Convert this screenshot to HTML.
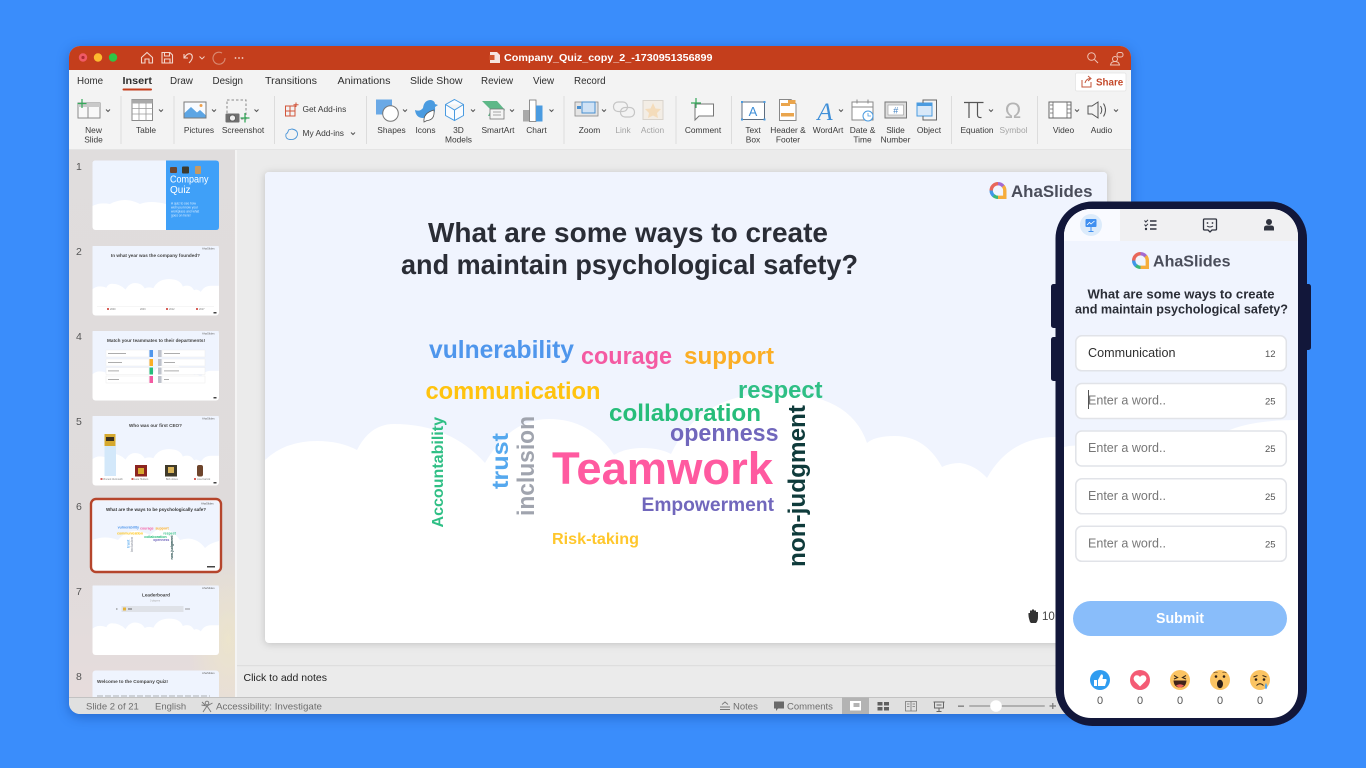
<!DOCTYPE html>
<html lang="en"><head><meta charset="utf-8"><title>AhaSlides PowerPoint</title>
<style>
html,body{margin:0;padding:0;width:1366px;height:768px;overflow:hidden;background:#3a8dfb}
svg{display:block;font-family:"Liberation Sans",Arial,sans-serif}
.l{font-size:8.4px;fill:#3a3a3a;text-anchor:middle}
.g{font-size:8.4px;fill:#a5a5a5;text-anchor:middle}
.t{font-size:9.8px;fill:#2e2e2e}
.c{fill:none;stroke:#555;stroke-width:1}
.n{font-size:10.5px;fill:#555}
.s{font-size:9.5px;fill:#6e6e6e}
.w{font-weight:700}
.ph{font-size:13px;fill:#777}
.ct{font-size:9.5px;fill:#555}
.z{font-size:11px;fill:#555;text-anchor:middle}
</style></head><body>
<svg width="1366" height="768" viewBox="0 0 1366 768" xmlns="http://www.w3.org/2000/svg">
<defs>
<linearGradient id="pane" x1="0" y1="0" x2="0" y2="1"><stop offset="0" stop-color="#e0dddd"/><stop offset=".7" stop-color="#dfdbdb"/><stop offset="1" stop-color="#e6dcdc"/></linearGradient>
<radialGradient id="yel" cx=".5" cy=".5" r=".5"><stop offset="0" stop-color="#f0e8c4" stop-opacity=".65"/><stop offset="1" stop-color="#f0e8c4" stop-opacity="0"/></radialGradient>
<clipPath id="win"><rect x="69" y="46" width="1062" height="668" rx="11"/></clipPath>
<clipPath id="scr"><rect x="1064" y="209" width="234" height="509" rx="27"/></clipPath>
<clipPath id="pn"><rect x="69" y="150" width="166" height="547"/></clipPath>
<path id="sky" d="M265 460Q285 441 317 441Q340 441 357 450Q370 424 394 424Q450 424 485 463Q510 419 549 419Q590 419 614 455Q625 448 642 448Q660 448 671 454Q700 393 775 393Q850 393 867 443Q875 436 895 436Q925 436 942 467Q950 463 960 463Q975 465 987 478Q1010 437 1056 437H1107V176Q1107 172 1103 172H269Q265 172 265 176Z"/>
<g id="wc1" font-weight="700">
<text x="429" y="358" font-size="25" fill="#4f96ec" textLength="145" lengthAdjust="spacingAndGlyphs">vulnerability</text>
<text x="581" y="364" font-size="24" fill="#f45aa2" textLength="91" lengthAdjust="spacingAndGlyphs">courage</text>
<text x="684" y="364" font-size="24" fill="#fbae25" textLength="90" lengthAdjust="spacingAndGlyphs">support</text>
<text x="425.5" y="399" font-size="24" fill="#ffc30f" textLength="175" lengthAdjust="spacingAndGlyphs">communication</text>
<text x="738" y="398" font-size="24" fill="#2fbf85" textLength="84.5" lengthAdjust="spacingAndGlyphs">respect</text>
<text x="609" y="421" font-size="24" fill="#27bd7a" textLength="152" lengthAdjust="spacingAndGlyphs">collaboration</text>
<text x="670" y="441" font-size="24" fill="#7167bc" textLength="108.5" lengthAdjust="spacingAndGlyphs">openness</text>
<text transform="translate(508 489) rotate(-90)" font-size="23" fill="#55a8ee" textLength="56" lengthAdjust="spacingAndGlyphs">trust</text>
<text transform="translate(534 516) rotate(-90)" font-size="24" fill="#a0a4ae" textLength="100" lengthAdjust="spacingAndGlyphs">inclusion</text>
<text transform="translate(805 567) rotate(-90)" font-size="24" fill="#0f3b3b" textLength="162" lengthAdjust="spacingAndGlyphs">non-judgment</text>
</g>
<g id="logo">
<path d="M9 2.2A6.8 6.8 0 0 1 14.4 5" fill="none" stroke="#a46ad0" stroke-width="3.4"/>
<path d="M2.2 9A6.8 6.8 0 0 1 9 2.2" fill="none" stroke="#e8665a" stroke-width="3.4"/>
<path d="M14.2 4.6A6.8 6.8 0 0 1 15.8 9V15.8H9" fill="none" stroke="#f6ad3c" stroke-width="3.4"/>
<path d="M9 15.8A6.8 6.8 0 0 1 4.4 14" fill="none" stroke="#3cb878" stroke-width="3.4"/>
<path d="M4.6 14.2A6.8 6.8 0 0 1 2.2 9" fill="none" stroke="#3f97e8" stroke-width="3.4"/>
</g>
</defs>

<!-- window -->
<rect x="69" y="46" width="1062" height="668" rx="11" fill="#ececec" style="filter:drop-shadow(0 3px 6px rgba(10,60,150,.45))"/>
<g clip-path="url(#win)">
<rect x="69" y="46" width="1062" height="24" fill="#c43e1c"/>
<rect x="69" y="70" width="1062" height="80" fill="#f3f3f3"/>
<rect x="69" y="149.5" width="1062" height="1" fill="#d4d4d4"/>
<rect x="69" y="150" width="166" height="547" fill="url(#pane)"/>
<ellipse cx="228" cy="640" rx="40" ry="90" fill="url(#yel)"/>
<rect x="235" y="150" width="2" height="547" fill="#f4f4f4"/>
<rect x="237" y="150" width="894" height="547" fill="#ebebeb"/>
<rect x="237" y="665" width="894" height="1.2" fill="#dedede"/>
<rect x="69" y="697" width="1062" height="17" fill="#e0e0e0"/>
<rect x="69" y="697" width="1062" height="1" fill="#c2c2c2"/>
</g>

<!-- title bar -->
<circle cx="83" cy="57.5" r="4.2" fill="#f05a66"/><circle cx="83" cy="57.5" r="1.6" fill="#b02a34"/>
<circle cx="98" cy="57.5" r="4.2" fill="#fdbb2e"/><circle cx="113" cy="57.5" r="4.2" fill="#2fc545"/>
<g fill="none" stroke="#f3d6cc" stroke-width="1.1">
<path d="M141.5 57.5L147 52.5L152.5 57.5V63H149V59H145V63H141.5Z"/>
<path d="M162 52.5H170L172.5 55V63H162ZM164.5 52.5V56H169.5V52.5M164.5 63V59H170V63"/>
<path d="M184 54V58H188M184.5 57.5Q188 52 191.5 54.5Q194 58 189 63"/>
<path d="M199.5 56.5L202 59L204.5 56.5" stroke-width=".9"/>
<path d="M222 53A6 6 0 1 0 225 58" stroke="#d98a72"/>
</g>
<g fill="#f3d6cc"><circle cx="235.5" cy="58" r=".9"/><circle cx="239" cy="58" r=".9"/><circle cx="242.5" cy="58" r=".9"/></g>
<path d="M490 52H497L500 55V63H490Z" fill="#f6e5df"/><rect x="489.5" y="55" width="5" height="5" fill="#d2572f"/>
<text x="504" y="61" font-size="9.8" font-weight="700" fill="#fff" textLength="208.5" lengthAdjust="spacingAndGlyphs">Company_Quiz_copy_2_-1730951356899</text>
<g fill="none" stroke="#eec4b6" stroke-width="1"><circle cx="1091.5" cy="56.5" r="3.8"/><path d="M1094.5 59.5L1098 63"/>
<circle cx="1115" cy="59" r="2.5"/><path d="M1110.5 65Q1111 61.5 1115 61.5Q1119 61.5 1119.5 65Z"/><rect x="1117" y="52.5" width="6" height="4.5" rx="2"/></g>

<!-- tabs -->
<text class="t" x="77" y="84">Home</text>
<text class="t w" x="122.5" y="84" textLength="29.5" lengthAdjust="spacingAndGlyphs">Insert</text>
<rect x="122.5" y="88.5" width="29.5" height="2" rx="1" fill="#c43e1c"/>
<text class="t" x="170" y="84">Draw</text>
<text class="t" x="212.5" y="84">Design</text>
<text class="t" x="265" y="84" textLength="52" lengthAdjust="spacingAndGlyphs">Transitions</text>
<text class="t" x="337.5" y="84" textLength="53" lengthAdjust="spacingAndGlyphs">Animations</text>
<text class="t" x="410" y="84" textLength="52.5" lengthAdjust="spacingAndGlyphs">Slide Show</text>
<text class="t" x="481" y="84">Review</text>
<text class="t" x="533" y="84">View</text>
<text class="t" x="574" y="84">Record</text>
<rect x="1075.5" y="73" width="50.5" height="18" rx="1.5" fill="#fff" stroke="#e4e4e4" stroke-width=".8"/>
<path d="M1082 80V87H1091V82M1085 83Q1086 79 1090 78.5M1088 76L1091 78.5L1088 81" fill="none" stroke="#c4553a" stroke-width="1"/>
<text x="1096" y="85.5" font-size="9.8" font-weight="700" fill="#c4492a">Share</text>

<!-- ribbon separators -->
<g fill="#dcdcdc"><rect x="120.5" y="96" width="1" height="48"/><rect x="173.5" y="96" width="1" height="48"/><rect x="274" y="96" width="1" height="48"/><rect x="366" y="96" width="1" height="48"/><rect x="563.5" y="96" width="1" height="48"/><rect x="675.5" y="96" width="1" height="48"/><rect x="731" y="96" width="1" height="48"/><rect x="951" y="96" width="1" height="48"/><rect x="1037" y="96" width="1" height="48"/></g>

<!-- ribbon labels -->
<text class="l" x="93.5" y="133">New</text><text class="l" x="93.5" y="142.5">Slide</text>
<text class="l" x="146" y="133">Table</text>
<text class="l" x="199" y="133">Pictures</text>
<text class="l" x="243" y="133">Screenshot</text>
<text x="302.5" y="112" font-size="8.4" fill="#3a3a3a">Get Add-ins</text>
<text x="302.5" y="136" font-size="8.4" fill="#3a3a3a">My Add-ins</text>
<text class="l" x="391.5" y="133">Shapes</text><text class="l" x="425.5" y="133">Icons</text>
<text class="l" x="458.5" y="133">3D</text><text class="l" x="458.5" y="142.5">Models</text>
<text class="l" x="498" y="133">SmartArt</text><text class="l" x="536.5" y="133">Chart</text>
<text class="l" x="589.5" y="133">Zoom</text><text class="g" x="623" y="133">Link</text><text class="g" x="652.5" y="133">Action</text>
<text class="l" x="703" y="133">Comment</text>
<text class="l" x="753" y="133">Text</text><text class="l" x="753" y="142.5">Box</text>
<text class="l" x="788" y="133">Header &amp;</text><text class="l" x="788" y="142.5">Footer</text>
<text class="l" x="828" y="133">WordArt</text>
<text class="l" x="862.5" y="133">Date &amp;</text><text class="l" x="862.5" y="142.5">Time</text>
<text class="l" x="895.5" y="133">Slide</text><text class="l" x="895.5" y="142.5">Number</text>
<text class="l" x="929" y="133">Object</text>
<text class="l" x="977" y="133">Equation</text><text class="g" x="1013.5" y="133">Symbol</text>
<text class="l" x="1063.5" y="133">Video</text><text class="l" x="1101.5" y="133">Audio</text>

<!-- chevrons -->
<g class="c"><path d="M106 109.5l2 2 2-2M159 109.5l2 2 2-2M212 109.5l2 2 2-2M254.5 109.5l2 2 2-2M351 132.5l2 2 2-2M403 109.5l2 2 2-2M471 109.5l2 2 2-2M510 109.5l2 2 2-2M549.5 109.5l2 2 2-2M602 109.5l2 2 2-2M839 109.5l2 2 2-2M989 109.5l2 2 2-2M1075 109.5l2 2 2-2M1114 109.5l2 2 2-2"/></g>

<!-- ribbon icons -->
<rect x="78" y="103" width="22" height="15" fill="#f8f8f8" stroke="#8a8a8a"/><rect x="78" y="103" width="22" height="4" fill="#c9c9c9"/><path d="M88 107V118" stroke="#8a8a8a"/>
<path d="M82 99V108M77.5 103.5H86.5" stroke="#35a85a" stroke-width="1.2"/>
<rect x="132" y="99.5" width="20.5" height="21" fill="#fff" stroke="#8a8a8a"/><rect x="132" y="99.5" width="20.5" height="4" fill="#a9a9a9"/>
<path d="M139 103V120.5M146 103V120.5M132 108.5H152.5M132 114H152.5" stroke="#9a9a9a" stroke-width=".8"/>
<rect x="184" y="102" width="22" height="16" fill="#f8fbff" stroke="#7a7a7a"/>
<path d="M184.5 117.5V113L191 107L197 112.5L200 110L205.5 115V117.5Z" fill="#5ca5e4"/><circle cx="201" cy="105.5" r="1.5" fill="#f0a04a"/>
<rect x="227" y="100" width="19" height="19" fill="none" stroke="#8a8a8a" stroke-dasharray="2.5 2"/>
<rect x="225.5" y="113.5" width="14" height="9" rx="1" fill="#6f6f6f"/><circle cx="232.5" cy="118" r="3" fill="#eee" stroke="#555" stroke-width=".7"/>
<path d="M245 113V122.5M240.5 118H249.5" stroke="#35a85a" stroke-width="1.3"/>
<path d="M285.5 106H295V116H285.5ZM290 106V116M285.5 111H295M296 102.5V107M293.5 104.7H298.5" fill="none" stroke="#d2553a" stroke-width="1"/>
<path d="M292 129Q298 130 297.5 135Q296 140 290 139.5Q285 139 286 134Q288 133 288.5 130Z" fill="none" stroke="#4d97d8" stroke-width=".9"/>
<rect x="376" y="99.5" width="16" height="15" fill="#6aa9e6"/><circle cx="390.5" cy="113.5" r="7.8" fill="#fff" stroke="#777"/>
<path d="M415 110Q420 112 423 108Q424 100 431 100Q435 101 435 104L438 105L435 107Q436 116 428 118H423Q416 118 415 110Z" fill="#4a9be0"/>
<path d="M424 122Q423 113 434 110Q435 120 427 120.5Z" fill="#fff" stroke="#555" stroke-width=".8"/>
<path d="M454.5 99.5L463.5 104.5V115.5L454.5 120.5L445.5 115.5V104.5ZM445.5 104.5L454.5 110L463.5 104.5M454.5 110V120.5" fill="#fafcff" stroke="#4a9be0" stroke-width="1"/>
<path d="M482 101H497L505 110L497 116H488L491 110Z" fill="#5eb888"/><rect x="490" y="109" width="14" height="10" fill="#f4f4f4" stroke="#777" stroke-width=".8"/><path d="M493 112H501M493 115H501" stroke="#888" stroke-width=".8"/>
<rect x="523" y="110" width="6.5" height="11.5" fill="#a9a9a9"/><rect x="529.5" y="100" width="6.5" height="21.5" fill="#fff" stroke="#777" stroke-width=".8"/><rect x="536" y="105.5" width="6.5" height="16" fill="#4a9be0"/>
<rect x="575" y="102" width="23" height="14" fill="#e4e4e4" stroke="#888" stroke-width=".8"/><rect x="582" y="102" width="13" height="11" fill="#cfe2f5" stroke="#4a90d0"/><rect x="577" y="106" width="4" height="3" fill="#4a90d0"/>
<g fill="none" stroke="#c5c5c5" stroke-width="1.2"><rect x="613.5" y="102" width="14" height="9.5" rx="4.5"/><rect x="620.5" y="107.5" width="14" height="9.5" rx="4.5"/></g>
<rect x="643" y="100.5" width="20" height="19" fill="#f3ede5" stroke="#d8d3cc"/><path d="M653 103L655.5 108.5L661 109L657 113L658 118L653 115.5L648 118L649 113L645 109L650.5 108.5Z" fill="#f4dcbb"/>
<path d="M695 104H713.5V116H699L695 120V116H695Z" fill="#fff" stroke="#777"/><path d="M696 98V108M691 103H701" stroke="#35a85a" stroke-width="1.2"/>
<rect x="742" y="102" width="22.5" height="17.5" fill="#fff" stroke="#5d6d80"/><g fill="#4a9be0"><rect x="741" y="101" width="2" height="2"/><rect x="763.5" y="101" width="2" height="2"/><rect x="741" y="118.5" width="2" height="2"/><rect x="763.5" y="118.5" width="2" height="2"/></g>
<text x="753" y="116" font-size="13" fill="#3f8fd8" text-anchor="middle">A</text>
<path d="M779.5 99.5H791L796 104V120.5H779.5Z" fill="#fff" stroke="#888"/><rect x="781" y="103" width="9" height="3" fill="#eaa54d"/><rect x="781" y="113" width="13" height="3.5" fill="#eaa54d"/><rect x="788" y="100" width="7.5" height="4" fill="#eaa54d"/>
<text x="825" y="120" font-size="25" font-style="italic" fill="#3f8fd8" text-anchor="middle" font-family="Liberation Serif">A</text>
<rect x="852" y="102" width="21" height="18" fill="#fff" stroke="#8a8a8a"/><path d="M852 107H873M857 99.5V103.5M868 99.5V103.5" stroke="#8a8a8a"/><circle cx="868" cy="116" r="5" fill="#fff" stroke="#4a9be0"/><path d="M868 113V116H871" fill="none" stroke="#4a9be0" stroke-width=".8"/>
<rect x="885" y="102" width="21.5" height="16" fill="#dedede" stroke="#777"/><rect x="888" y="105" width="15.5" height="10" fill="#fff" stroke="#9a9a9a" stroke-width=".6"/><text x="895.8" y="113.5" font-size="9" fill="#3f7fc0" text-anchor="middle">#</text>
<rect x="917" y="103" width="15" height="13" fill="#d8e8f8" stroke="#4a9be0"/><rect x="917" y="103" width="15" height="3" fill="#4a9be0"/><path d="M923 103V100H936.5V120H923V116" fill="none" stroke="#666"/>
<path d="M964 102.5H983.5M969 102.5V118M977.5 102.5V115Q977.5 118 981.5 117.5" fill="none" stroke="#555" stroke-width="1.2"/>
<text x="1013" y="118" font-size="22" fill="#b4b4b4" text-anchor="middle" font-family="Liberation Sans">Ω</text>
<rect x="1049" y="102" width="22" height="16" fill="#fff" stroke="#666"/><path d="M1053 102V118M1067 102V118" stroke="#666" stroke-width=".8"/><path d="M1050 105H1053M1050 109H1053M1050 113H1053M1067 105H1071M1067 109H1071M1067 113H1071" stroke="#666" stroke-width=".8"/>
<path d="M1088 106H1092L1098 102V118L1092 114H1088ZM1100.5 106Q1103 110 1100.5 114M1103.5 103.5Q1107.5 110 1103.5 116.5" fill="none" stroke="#555"/>

<!-- thumbnails -->
<g clip-path="url(#pn)">
<text class="n" x="76" y="170">1</text><text class="n" x="76" y="255">2</text><text class="n" x="76" y="340">4</text><text class="n" x="76" y="425">5</text><text class="n" x="76" y="510">6</text><text class="n" x="76" y="595">7</text><text class="n" x="76" y="680">8</text>

<!-- 1 -->
<rect x="92.5" y="160.5" width="126.5" height="69.5" rx="3" fill="#fff"/>
<path d="M92.5 163.5Q92.5 160.5 95.5 160.5H166V204Q150 200 140 204Q125 196 110 204Q100 202 92.5 206Z" fill="#eff4fe"/>
<path d="M166 160.5H216Q219 160.5 219 163.5V227Q219 230 216 230H166Z" fill="#3fa0f8"/>
<rect x="170" y="167" width="7" height="6" rx="1" fill="#6d4630"/><rect x="182" y="166.5" width="7" height="7" rx="1" fill="#3d3a2c"/><rect x="195" y="166" width="6" height="8" rx="1" fill="#c69a64"/>
<text x="170" y="182.5" font-size="10" fill="#fff" textLength="38.5" lengthAdjust="spacingAndGlyphs">Company</text><text x="170" y="193" font-size="10" fill="#fff">Quiz</text>
<g font-size="3.2" fill="#d6ebff"><text x="171" y="204.5">A quiz to see how</text><text x="171" y="208.5">well you know your</text><text x="171" y="212.5">workplace and what</text><text x="171" y="216.5">goes on here!</text></g>

<!-- 2 -->
<rect x="92.5" y="246" width="126.5" height="69.5" rx="3" fill="#fff"/>
<use href="#sky" fill="#eff4fe" transform="translate(92.5 246) scale(.15) translate(-265 -172)"/>
<text x="111" y="257" font-size="4.3" font-weight="700" fill="#444" textLength="89" lengthAdjust="spacingAndGlyphs">In what year was the company founded?</text>
<g fill="#d8605a"><rect x="107" y="308" width="2" height="2"/><rect x="166" y="308" width="2" height="2"/><rect x="196" y="308" width="2" height="2"/></g>
<path d="M97 306.5H214" stroke="#eee" stroke-width=".5"/>
<g font-size="2.5" fill="#777"><text x="110" y="310">2000</text><text x="140" y="310">2003</text><text x="169" y="310">2012</text><text x="199" y="310">2017</text></g>
<rect x="213.5" y="312" width="3" height="1.5" fill="#444"/>
<text x="202" y="249.5" font-size="2.8" fill="#666">AhaSlides</text>

<!-- 4 -->
<rect x="92.5" y="331" width="126.5" height="69.5" rx="3" fill="#fff"/>
<use href="#sky" fill="#eff4fe" transform="translate(92.5 331) scale(.15) translate(-265 -172)"/>
<text x="107" y="342" font-size="4.3" font-weight="700" fill="#444" textLength="98" lengthAdjust="spacingAndGlyphs">Match your teammates to their departments!</text>
<g fill="#fff" stroke="#e8e8e8" stroke-width=".4"><rect x="106" y="350" width="43" height="7"/><rect x="106" y="359" width="43" height="7"/><rect x="106" y="367.5" width="43" height="7"/><rect x="106" y="376" width="43" height="7"/><rect x="162" y="350" width="43" height="7"/><rect x="162" y="359" width="43" height="7"/><rect x="162" y="367.5" width="43" height="7"/><rect x="162" y="376" width="43" height="7"/></g>
<rect x="149.5" y="350" width="3.5" height="7" fill="#4f96ec"/><rect x="149.5" y="359" width="3.5" height="7" fill="#fbae25"/><rect x="149.5" y="367.5" width="3.5" height="7" fill="#27bd7a"/><rect x="149.5" y="376" width="3.5" height="7" fill="#f45aa2"/>
<g fill="#bfc3cc"><rect x="158" y="350" width="3.5" height="7"/><rect x="158" y="359" width="3.5" height="7"/><rect x="158" y="367.5" width="3.5" height="7"/><rect x="158" y="376" width="3.5" height="7"/></g>
<g fill="#999"><rect x="108" y="353" width="18" height=".8"/><rect x="108" y="362" width="14" height=".8"/><rect x="108" y="370.5" width="11" height=".8"/><rect x="108" y="379" width="11" height=".8"/><rect x="164" y="353" width="16" height=".8"/><rect x="164" y="362" width="11" height=".8"/><rect x="164" y="370.5" width="15" height=".8"/><rect x="164" y="379" width="5" height=".8"/></g>
<rect x="213.5" y="397" width="3" height="1.5" fill="#444"/>
<text x="202" y="334.5" font-size="2.8" fill="#666">AhaSlides</text>

<!-- 5 -->
<rect x="92.5" y="416" width="126.5" height="69.5" rx="3" fill="#fff"/>
<use href="#sky" fill="#eff4fe" transform="translate(92.5 416) scale(.15) translate(-265 -172)"/>
<text x="129" y="427" font-size="4.3" font-weight="700" fill="#444" textLength="53" lengthAdjust="spacingAndGlyphs">Who was our first CEO?</text>
<rect x="104.5" y="434" width="11" height="12" fill="#d6a92f"/><rect x="106" y="437" width="8" height="4" fill="#3a3020"/>
<rect x="104.5" y="446" width="11.5" height="30" fill="#d3e8fa"/>
<rect x="135" y="465" width="12" height="11.5" fill="#8c2420"/><rect x="138" y="468" width="6" height="6" fill="#d6a92f"/>
<rect x="165" y="465" width="12" height="11.5" fill="#3f3a2a"/><rect x="168" y="467" width="6" height="6" fill="#d9b45a"/>
<rect x="197" y="465" width="6" height="11.5" rx="2" fill="#6e452c"/>
<g fill="#d8605a"><rect x="100.5" y="478" width="2" height="2"/><rect x="131.5" y="478" width="2" height="2"/><rect x="194" y="478" width="2" height="2"/></g>
<g font-size="2.5" fill="#777"><text x="103" y="480">Vincent Vermouth</text><text x="134" y="480">Lara Hudson</text><text x="166" y="480">Bob Jones</text><text x="197" y="480">Lisa Carrick</text></g>
<rect x="213.5" y="482" width="3" height="1.5" fill="#444"/>
<text x="202" y="419.5" font-size="2.8" fill="#666">AhaSlides</text>

<!-- 6 -->
<rect x="91" y="499" width="130" height="73" rx="5" fill="#fff" stroke="#b5452c" stroke-width="2.4"/>
<path d="M92.5 540V504Q92.5 501 95.5 501H216Q219 501 219 504V541Q210 543 205 548Q195 535 180 540Q165 520 150 535Q130 525 118 540Q105 535 92.5 540Z" fill="#eff4fe"/>
<use href="#wc1" transform="translate(117 501) scale(.148) translate(-425 -172)"/>
<text x="106" y="511" font-size="4.5" font-weight="700" fill="#333" textLength="100" lengthAdjust="spacingAndGlyphs">What are the ways to be psychologically safe?</text>
<text x="201" y="504.5" font-size="2.8" fill="#555">AhaSlides</text>
<rect x="207" y="566" width="8" height="1.5" fill="#444"/>

<!-- 7 -->
<rect x="92.5" y="585.5" width="126.5" height="69.5" rx="3" fill="#fff"/>
<use href="#sky" fill="#eff4fe" transform="translate(92.5 585.5) scale(.15) translate(-265 -172)"/>
<text x="142" y="596.5" font-size="4.3" font-weight="700" fill="#444" textLength="28" lengthAdjust="spacingAndGlyphs">Leaderboard</text>
<text x="150" y="601.5" font-size="2.5" fill="#aaa">0 players</text>
<rect x="121.5" y="606" width="62" height="6" fill="#dfe2e8"/><rect x="123" y="607.5" width="3" height="3" fill="#e4b33a"/><rect x="128" y="608.5" width="4" height="1" fill="#666"/><rect x="116" y="608.5" width="1.5" height="1" fill="#777"/><rect x="185" y="608.5" width="5" height="1" fill="#999"/>
<text x="202" y="589" font-size="2.8" fill="#666">AhaSlides</text>

<!-- 8 -->
<rect x="92.5" y="670.5" width="126.5" height="69.5" rx="3" fill="#eff4fe"/>
<text x="97" y="683" font-size="4.3" font-weight="700" fill="#444" textLength="71" lengthAdjust="spacingAndGlyphs">Welcome to the Company Quiz!</text>
<text x="202" y="674" font-size="2.8" fill="#666">AhaSlides</text>
<path d="M97 696H210" stroke="#999" stroke-width=".8" stroke-dasharray="6 2"/>
</g>

<!-- main slide -->
<rect x="265" y="172" width="842" height="471" rx="4" fill="#fff" style="filter:drop-shadow(0 1px 4px rgba(0,0,0,.18))"/>
<use href="#sky" fill="#f0f4fe"/>
<use href="#logo" transform="translate(989 181.5)"/>
<text x="1011" y="197" font-size="16.5" font-weight="700" fill="#4a4d5a" textLength="81.5" lengthAdjust="spacingAndGlyphs">AhaSlides</text>
<g font-weight="700" fill="#2a2d36" font-size="28">
<text x="428" y="242" textLength="400" lengthAdjust="spacingAndGlyphs">What are some ways to create</text>
<text x="401" y="274" textLength="457" lengthAdjust="spacingAndGlyphs">and maintain psychological safety?</text>
</g>
<use href="#wc1"/>
<g font-weight="700">
<text x="552" y="484" font-size="45" fill="#ff5aa0" textLength="221" lengthAdjust="spacingAndGlyphs">Teamwork</text>
<text x="641.5" y="511" font-size="19" fill="#7167bc" textLength="132.5" lengthAdjust="spacingAndGlyphs">Empowerment</text>
<text x="552" y="544" font-size="16" fill="#ffc72c" textLength="87" lengthAdjust="spacingAndGlyphs">Risk-taking</text>
<text transform="translate(443 527.5) rotate(-90)" font-size="16" fill="#2fbf85" textLength="110.5" lengthAdjust="spacingAndGlyphs">Accountability</text>
</g>
<path d="M1030 622Q1028 616 1028.5 613H1030V610.5H1032V609.5H1034V610.5H1036V612H1038V617Q1038 621 1036 623H1031Z" fill="#333"/>
<text x="1042" y="620" font-size="11.5" fill="#444">10</text>

<!-- notes and status -->
<text x="243.5" y="681" font-size="10.5" fill="#222">Click to add notes</text>
<text class="s" x="86" y="709.5">Slide 2 of 21</text>
<text class="s" x="155" y="709.5">English</text>
<g fill="none" stroke="#777" stroke-width=".9"><circle cx="207" cy="703" r="1.8"/><path d="M201.5 705L207 706L212.5 703M207 706L203 712M207 706L211 712M202 702L205 705"/></g>
<text class="s" x="216" y="709.5" textLength="106" lengthAdjust="spacingAndGlyphs">Accessibility: Investigate</text>
<path d="M720 707H730M720 709.5H730M722 704.5L725 702L728 704.5" fill="none" stroke="#777" stroke-width=".9"/>
<text class="s" x="733" y="709.5">Notes</text>
<path d="M774 701.5H784V708.5H778L776 711V708.5H774Z" fill="#6a6a6a"/>
<text class="s" x="787" y="709.5">Comments</text>
<rect x="842" y="697.5" width="27" height="16.5" fill="#b3b3b3"/>
<rect x="850" y="701" width="11" height="9.5" fill="#fff"/><rect x="853.5" y="703" width="6" height="4" fill="#b3b3b3"/>
<g fill="#5f5f5f"><rect x="877.5" y="702" width="5" height="3.5"/><rect x="884" y="702" width="5" height="3.5"/><rect x="877.5" y="707" width="5" height="3.5"/><rect x="884" y="707" width="5" height="3.5"/></g>
<path d="M905.5 701.5H911V711H905.5ZM911 701.5H916.5V711H911ZM907 704H909.5M907 706.5H909.5M912.5 704H915M912.5 706.5H915" fill="none" stroke="#777" stroke-width=".8"/>
<path d="M933.5 702H944.5M934.5 702V708H943.5V702M939 708V711M936.5 711.5H941.5M936.5 705H941.5" fill="none" stroke="#666" stroke-width="1"/>
<rect x="958" y="705.5" width="6" height="1.3" fill="#777"/>
<rect x="969" y="705" width="76" height="2" rx="1" fill="#b0b0b0"/>
<circle cx="996" cy="706" r="5.8" fill="#fff"/>
<path d="M1049.5 706H1056M1052.8 703V709" stroke="#777" stroke-width="1.2"/>

<!-- phone -->
<g fill="#12173a">
<rect x="1051" y="284" width="8" height="44" rx="2.5"/><rect x="1051" y="337" width="8" height="44" rx="2.5"/><rect x="1303" y="284" width="8" height="66" rx="2.5"/>
<rect x="1055.5" y="201.5" width="251.5" height="524.5" rx="37"/>
</g>
<g clip-path="url(#scr)">
<rect x="1064" y="209" width="234" height="509" fill="#fff"/>
<path d="M1064 241H1298V420Q1250 420 1225 432Q1180 470 1130 465Q1090 440 1064 447Z" fill="#f0f4fe"/>
<rect x="1064" y="209" width="234" height="32" fill="#f0f0f2"/>
<rect x="1064" y="209" width="56" height="32" fill="#f9faff"/>
</g>
<circle cx="1091" cy="225" r="11" fill="#dcebfb"/>
<rect x="1085.5" y="219" width="11" height="8" rx="1" fill="#3f8ff0"/><path d="M1087 225L1089.5 222.5L1091 224L1094.5 221" fill="none" stroke="#fff" stroke-width=".8"/><path d="M1091 227V231.5M1088.5 231.5H1093.5" stroke="#3f8ff0" stroke-width="1"/>
<g fill="none" stroke="#30333f" stroke-width="1.5"><path d="M1150 221H1156.5M1150 225H1156.5M1150 229H1156.5"/><path d="M1144.5 220.5L1145.8 222L1148 219.8M1144.5 224.5L1145.8 226L1148 223.8" stroke-width="1"/></g><circle cx="1146" cy="229" r="1.2" fill="#30333f"/>
<path d="M1204.5 219H1215.5Q1216.5 219 1216.5 220V229Q1216.5 230 1215.5 230H1212L1210 232L1208 230H1204.5Q1203.5 230 1203.5 229V220Q1203.5 219 1204.5 219Z" fill="none" stroke="#30333f" stroke-width="1.3"/>
<circle cx="1207.5" cy="223" r=".9" fill="#30333f"/><circle cx="1212.5" cy="223" r=".9" fill="#30333f"/><path d="M1207 226Q1210 228 1213 226" fill="none" stroke="#30333f"/>
<circle cx="1269" cy="222" r="3" fill="#30333f"/><path d="M1264 230.5V228Q1264 225.5 1267 225.5H1271Q1274 225.5 1274 228V230.5Z" fill="#30333f"/>
<use href="#logo" transform="translate(1131.5 251.5)"/>
<text x="1153" y="266.5" font-size="16" font-weight="700" fill="#4a4d5a" textLength="77.5" lengthAdjust="spacingAndGlyphs">AhaSlides</text>
<g font-size="12.8" font-weight="700" fill="#2a2d36">
<text x="1087.5" y="298.5" textLength="187" lengthAdjust="spacingAndGlyphs">What are some ways to create</text>
<text x="1075" y="313.5" textLength="213" lengthAdjust="spacingAndGlyphs">and maintain psychological safety?</text>
</g>
<g fill="#fff" stroke="#e1e3e8" stroke-width="1.5">
<rect x="1075.8" y="335.8" width="210.5" height="35" rx="6"/>
<rect x="1075.8" y="383.5" width="210.5" height="35" rx="6"/>
<rect x="1075.8" y="431" width="210.5" height="35" rx="6"/>
<rect x="1075.8" y="478.8" width="210.5" height="35" rx="6"/>
<rect x="1075.8" y="526.3" width="210.5" height="35" rx="6"/>
</g>
<text x="1088" y="357" font-size="13" fill="#2f2f2f" textLength="87.5" lengthAdjust="spacingAndGlyphs">Communication</text>
<text class="ct" x="1265" y="357">12</text>
<rect x="1088" y="390" width="1" height="19" fill="#555"/>
<text class="ph" x="1088" y="404.5" textLength="78" lengthAdjust="spacingAndGlyphs">Enter a word..</text><text class="ct" x="1265" y="404.5">25</text>
<text class="ph" x="1088" y="452" textLength="78" lengthAdjust="spacingAndGlyphs">Enter a word..</text><text class="ct" x="1265" y="452">25</text>
<text class="ph" x="1088" y="500" textLength="78" lengthAdjust="spacingAndGlyphs">Enter a word..</text><text class="ct" x="1265" y="500">25</text>
<text class="ph" x="1088" y="547.5" textLength="78" lengthAdjust="spacingAndGlyphs">Enter a word..</text><text class="ct" x="1265" y="547.5">25</text>
<rect x="1073" y="601" width="214" height="35" rx="17.5" fill="#89bdfa"/>
<text x="1180" y="623" font-size="14.5" font-weight="700" fill="#fff" text-anchor="middle" textLength="48" lengthAdjust="spacingAndGlyphs">Submit</text>

<!-- reactions -->
<circle cx="1100" cy="680" r="10" fill="#2f9cf0"/>
<path d="M1094 680H1097V686H1094ZM1098 680L1101 674.5Q1103 674 1103 676.5L1102.5 679H1106Q1107 679.5 1106.5 681L1105 686H1098Z" fill="#fff"/>
<circle cx="1140" cy="680" r="10" fill="#f45b75"/>
<path d="M1140 686.5L1134.5 681Q1132.5 678 1135 675.7Q1138 674.5 1140 677Q1142 674.5 1145 675.7Q1147.5 678 1145.5 681Z" fill="#fff"/>
<circle cx="1180" cy="680" r="10" fill="#fbc463"/>
<path d="M1174 675.5L1177.5 677.5L1174 679M1186 675.5L1182.5 677.5L1186 679" fill="none" stroke="#3a2a1a" stroke-width="1.1"/>
<path d="M1173.5 680.5H1186.5Q1186 687.5 1180 687.5Q1174 687.5 1173.5 680.5Z" fill="#40241a"/><path d="M1176 685.5Q1180 683 1184 685.5Q1182 687.5 1180 687.5Q1178 687.5 1176 685.5Z" fill="#f0605a"/>
<circle cx="1220" cy="680" r="10" fill="#fbc463"/>
<circle cx="1216" cy="676.5" r="1.3" fill="#2e2018"/><circle cx="1224" cy="676.5" r="1.3" fill="#2e2018"/><ellipse cx="1220" cy="684" rx="3" ry="4.2" fill="#2e2018"/>
<path d="M1213.5 673Q1215.5 671.5 1217.5 672.5M1222.5 672.5Q1224.5 671.5 1226.5 673" fill="none" stroke="#7a5420" stroke-width=".8"/>
<circle cx="1260" cy="680" r="10" fill="#fbc463"/>
<circle cx="1256" cy="679.5" r="1.3" fill="#2e2018"/><circle cx="1264" cy="679.5" r="1.3" fill="#2e2018"/>
<path d="M1253.5 677L1257.5 675.5M1266.5 677L1262.5 675.5M1256.5 685.5Q1260 682 1263.5 685.5" fill="none" stroke="#3a2a1a" stroke-width="1"/>
<path d="M1266 684Q1264.5 687 1266 688.5Q1267.5 687 1266 684Z" fill="#5aa6e8" stroke="#5aa6e8"/>
<text class="z" x="1100" y="704">0</text><text class="z" x="1140" y="704">0</text><text class="z" x="1180" y="704">0</text><text class="z" x="1220" y="704">0</text><text class="z" x="1260" y="704">0</text>
</svg>
</body></html>
